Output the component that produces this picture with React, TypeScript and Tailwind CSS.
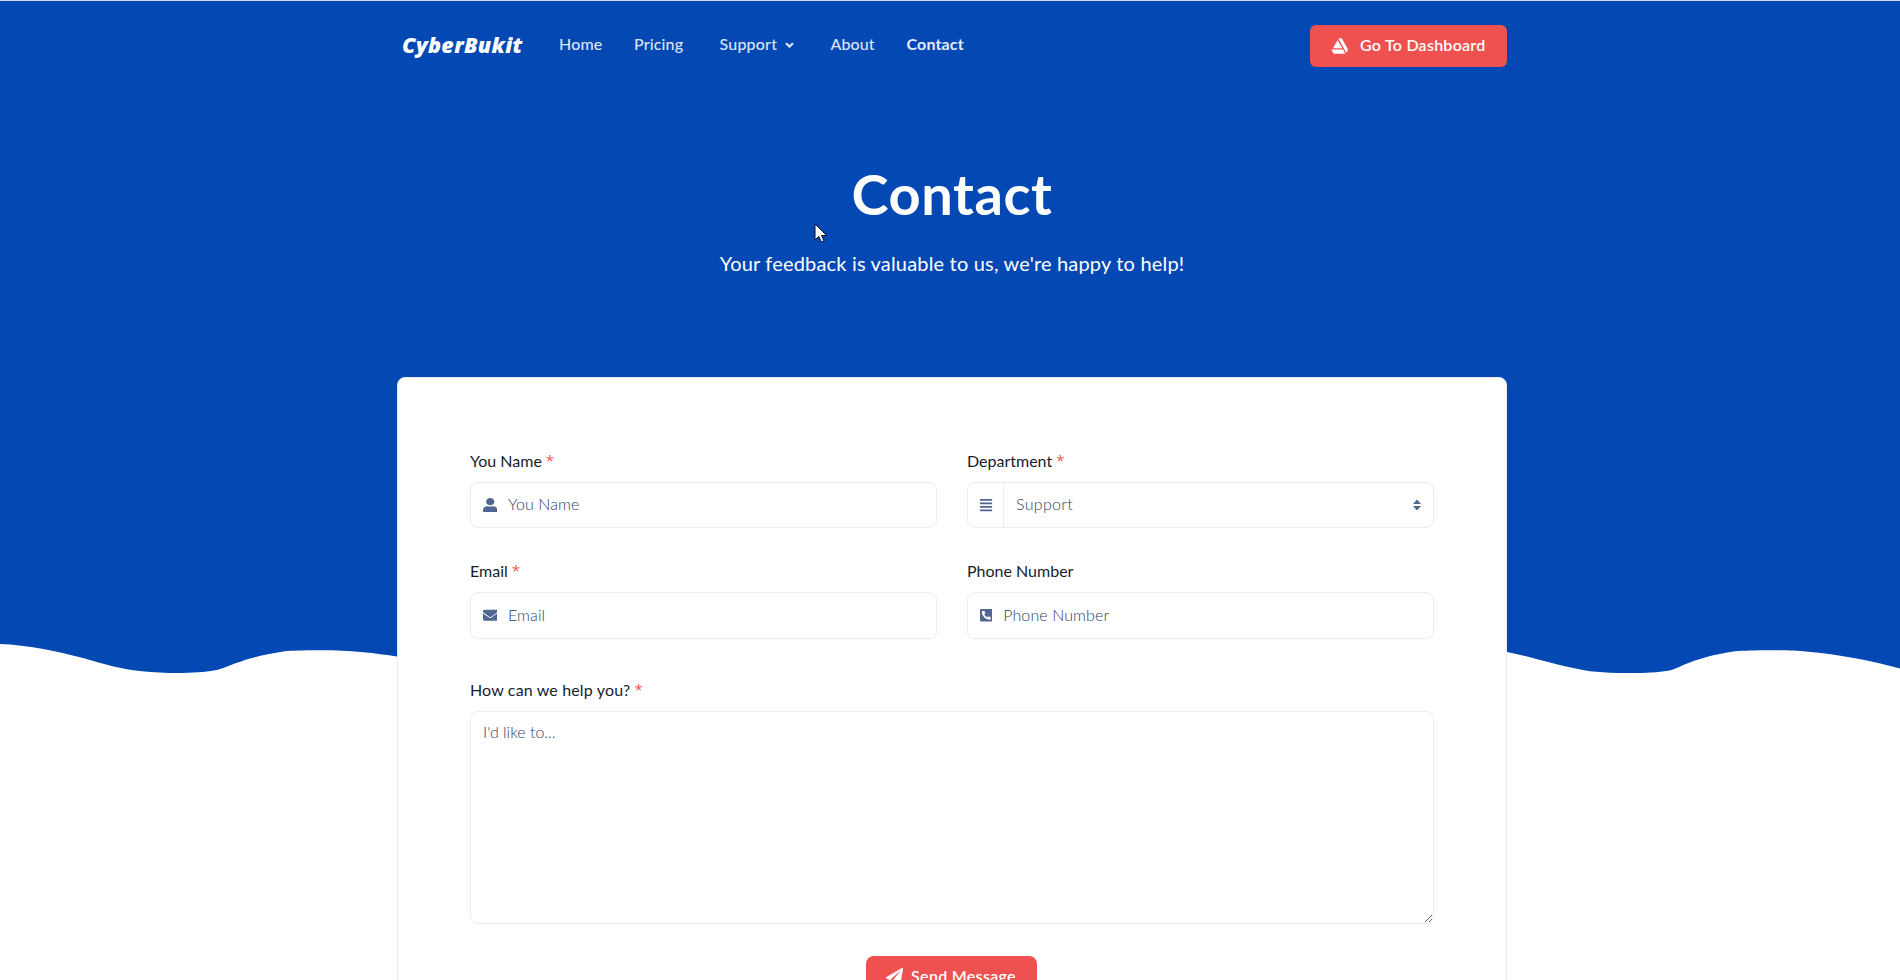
import type { ReactNode } from "react";
import { FaAlignJustify, FaEnvelope, FaPaperPlane, FaPhoneSquareAlt, FaUser } from "react-icons/fa";

function Label({ children, required = false, className = "" }: { children: ReactNode; required?: boolean; className?: string }) {
  return (
    <label className={`flex h-6 leading-6 text-[#161c2d] ${className}`}>
      {children}
      {required && <span className="-mt-px ml-1 font-['Open_Sans',sans-serif] text-[15px] font-normal text-[#f25757]">*</span>}
    </label>
  );
}

function Field({ icon, placeholder, size }: { icon: ReactNode; placeholder: string; size: string }) {
  return (
    <div className={`flex items-center rounded-lg border border-[#ebecee] pl-[11.5px] text-[#506690] ${size}`}>
      {icon}
      <input
        placeholder={placeholder}
        className="h-full min-w-0 flex-1 bg-transparent pr-3 pb-[3px] pl-[11px] font-light tracking-[0.1px] outline-none placeholder:text-[#2f3f63] placeholder:opacity-100"
      />
    </div>
  );
}

function Wave() {
  return (
    <svg className="absolute inset-x-0 top-[640px] block" width="1900" height="36" viewBox="0 640 1900 36">
      <path
        fill="#0448b3"
        d="M0 640V644C28 645 56 651 83 658C104 664 124 670 142 671.2C166 673.6 196 673.8 215 670.3C229 667.5 240 658 285 651.3C300 649.6 338 650 355 651.5C370 652.6 385 654.6 397 656.6L420 660H1480L1507 652C1532 657 1562 667 1590 671.2C1616 673.8 1650 673.8 1668 670.8C1682 668 1690 658 1735 651.3C1755 649.6 1790 650 1806 651.5C1840 654.5 1872 661 1900 668.5V640Z"
      />
    </svg>
  );
}

function TriangleMark() {
  return (
    <svg className="mr-[12px]" width="17" height="16" viewBox="0 0 17 16" fill="currentColor">
      <path d="M6.6 2 11.2 10.2H2z" />
      <path d="M.2 11.5h11.9l2.1 4.2H3.4a1.6 1.6 0 0 1-1.4-.9z" />
      <path d="M7.4.3h2.5a1.6 1.6 0 0 1 1.4.8l5.4 9.8c.3.5.3 1 0 1.5l-1.4 2.6z" />
    </svg>
  );
}

function Header() {
  return (
    <header className="mx-auto flex h-[89px] w-[1114px] items-center pl-[9px]">
      <a className="-mt-0.5 w-[157px] font-['Open_Sans',sans-serif] text-[21.5px] leading-6 font-extrabold tracking-[0.35px] text-white italic">
        CyberBukit
      </a>
      <nav className="-mt-1 flex flex-1 items-center font-medium text-[#dbe5f5]">
        <a className="w-[75px] tracking-[0.15px]">Home</a>
        <a className="w-[85.5px] tracking-[0.15px]">Pricing</a>
        <a className="flex w-[111px] items-center tracking-[0.2px]">
          Support
          <svg className="mt-1 ml-2" width="9" height="7" viewBox="0 0 9 7" fill="none" stroke="#dbe5f5" strokeWidth="2.2" strokeLinecap="round" strokeLinejoin="round">
            <path d="M1.6 1.8 4.5 4.6l2.9-2.8" />
          </svg>
        </a>
        <a className="w-[76px] tracking-[0.1px]">About</a>
        <a className="font-bold tracking-[0.15px] text-[#e6edf9]">Contact</a>
      </nav>
      <button className="flex h-[42px] w-[197px] items-center rounded-md bg-[#ef5050] pl-[21px] font-semibold tracking-[0.25px] text-white">
        <TriangleMark />
        <span className="-mt-0.5 leading-6">Go To Dashboard</span>
      </button>
    </header>
  );
}

export default function App() {
  return (
    <div className="relative h-[980px] w-[1900px] overflow-hidden bg-white font-['Lato',sans-serif] text-base">
      <div className="h-[640px] border-t border-[#cfd8e6] bg-[#0448b3]">
        <Header />
        <div className="flex flex-col items-center pl-1 text-white">
          <h1 className="mt-[68px] text-[56px] leading-[72px] font-bold tracking-[0.6px]">Contact</h1>
          <p className="mt-[17px] text-[20px] leading-[32px] tracking-[0.18px]">
            Your feedback is valuable to us, we're happy to help!
          </p>
        </div>
      </div>
      <Wave />

      <main className="absolute top-[377px] left-[397px] h-[660px] w-[1110px] rounded-lg border border-[#ececf0] bg-white px-[72px] pt-[71px] shadow-[0_10px_22px_rgba(22,28,45,0.02)]">
        <form>
          <div className="grid grid-cols-2 gap-x-[30px]">
            <div>
              <Label required>You Name</Label>
              <Field size="mt-[9px] h-[46px]" placeholder="You Name" icon={<FaUser preserveAspectRatio="none" className="size-[14.5px]" />} />
            </div>
            <div>
              <Label required>Department</Label>
              <div className="relative mt-[9px] flex h-[46px] items-center rounded-lg border border-[#ebecee] text-[#506690]">
                <span className="flex h-full w-[36px] items-center justify-center border-r border-[#ebecee]">
                  <FaAlignJustify className="size-[14px]" />
                </span>
                <select className="h-full flex-1 appearance-none bg-transparent pb-[3px] pl-3 font-light tracking-[0.3px] text-[#2f3f63] outline-none">
                  <option>Support</option>
                </select>
                <svg className="pointer-events-none absolute top-[16px] right-3" width="8" height="12" viewBox="0 0 8 12" fill="#506690">
                  <path d="M0 5 4 .5 8 5zM0 7l4 4.5L8 7z" />
                </svg>
              </div>
            </div>
            <div className="mt-[31px]">
              <Label required>Email</Label>
              <Field size="mt-[9px] h-[47px]" placeholder="Email" icon={<FaEnvelope className="size-[14.5px]" />} />
            </div>
            <div className="mt-[31px]">
              <Label>Phone Number</Label>
              <Field size="mt-[9px] h-[47px]" placeholder="Phone Number" icon={<FaPhoneSquareAlt className="h-[14.5px] w-[12.7px]" />} />
            </div>
          </div>
          <Label required className="mt-[39px] tracking-[0.15px]">How can we help you?</Label>
          <textarea
            placeholder="I'd like to..."
            className="mt-[9px] block h-[213px] w-full rounded-lg border border-[#ebecee] px-3 py-[8px] leading-6 font-light outline-none placeholder:text-[#2f3f63] placeholder:opacity-100"
          />
          <button
            type="button"
            className="mx-auto mt-[32px] flex h-[42px] w-[171px] -translate-x-px items-center justify-center rounded-lg bg-[#ef5050] pb-0.5 font-semibold tracking-[0.3px] text-white"
          >
            <FaPaperPlane className="mr-2 size-[17px]" />
            Send Message
          </button>
        </form>
      </main>

      <svg className="absolute top-[223px] left-[813.5px]" width="14" height="20" viewBox="0 0 14 20">
        <path d="M1 1v16l3.8-3.6 2.6 5.6 2.6-1.2-2.5-5.3h5.2z" fill="#fff" stroke="#0a0f20" strokeWidth="1" />
      </svg>
    </div>
  );
}
